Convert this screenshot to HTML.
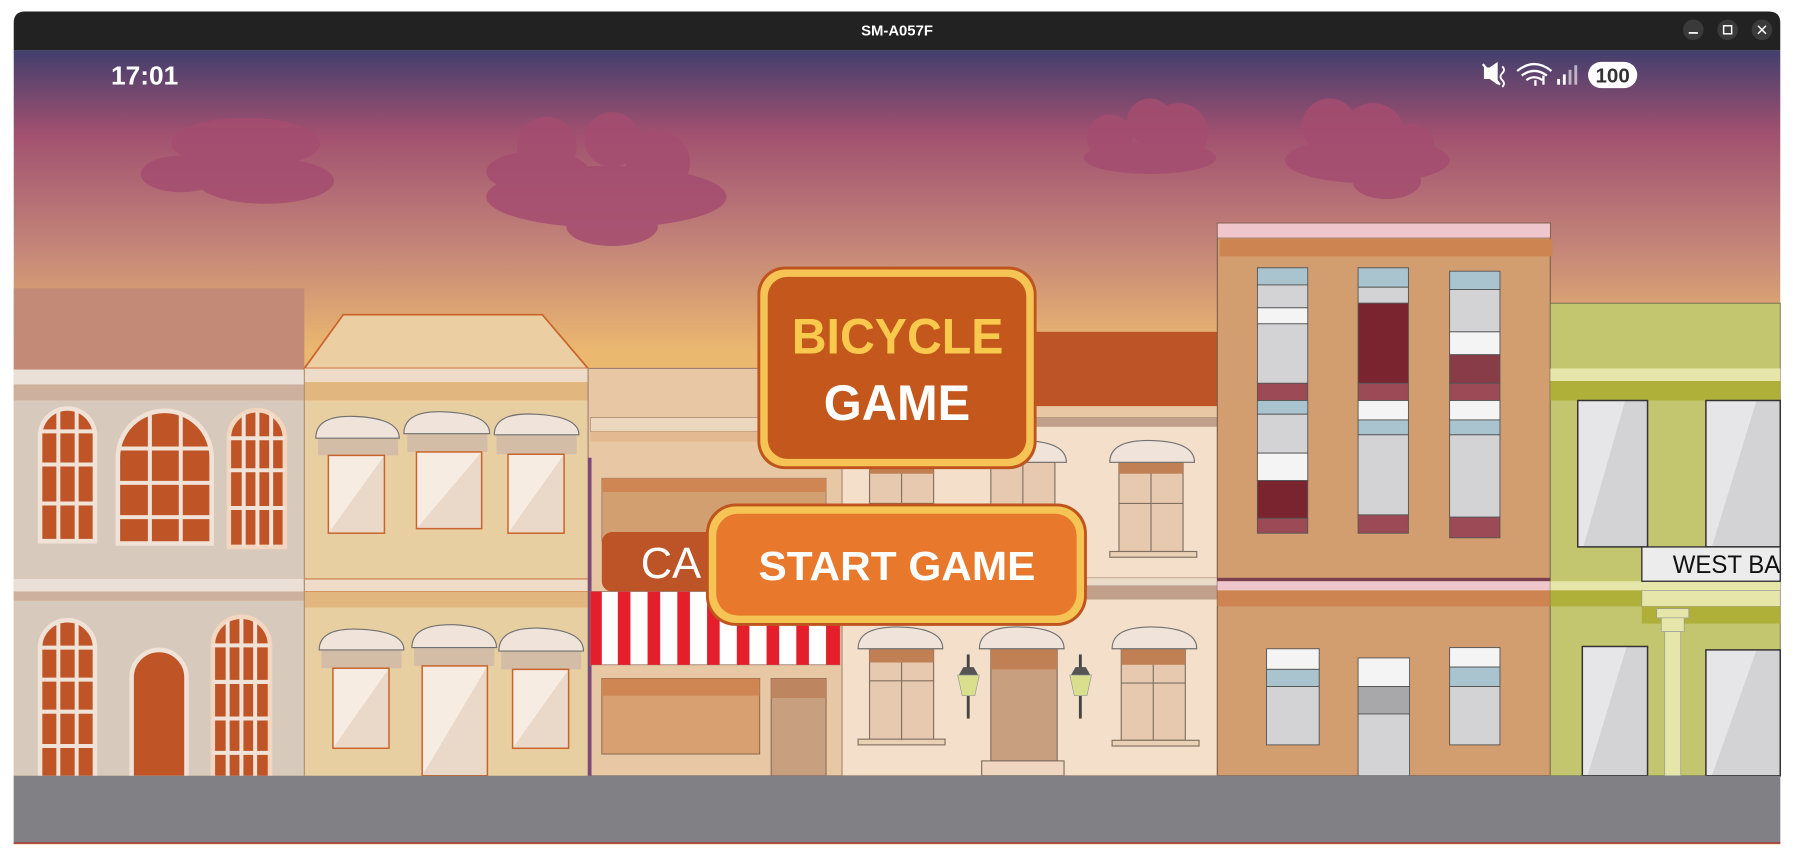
<!DOCTYPE html>
<html><head><meta charset="utf-8"><style>
html,body{margin:0;padding:0;background:#fff;width:1794px;height:860px;overflow:hidden}
svg{display:block}
</style></head><body>
<svg width="1794" height="860" viewBox="0 0 1568 751.6" xmlns="http://www.w3.org/2000/svg" font-family="'Liberation Sans', sans-serif">
<defs>
<linearGradient id="sky" x1="0" y1="44" x2="0" y2="330" gradientUnits="userSpaceOnUse">
<stop offset="0" stop-color="#423f6e"/><stop offset="0.25" stop-color="#a0506f"/><stop offset="0.6" stop-color="#c48579"/><stop offset="0.92" stop-color="#ebb86f"/></linearGradient>
<linearGradient id="wpane" x1="0" y1="0" x2="1" y2="1"><stop offset="0.5" stop-color="#f6ece2"/><stop offset="0.5" stop-color="#ead8c8"/></linearGradient>
<linearGradient id="gpane" x1="0" y1="0" x2="1" y2="0.6"><stop offset="0.5" stop-color="#e6e6e8"/><stop offset="0.5" stop-color="#d3d3d5"/></linearGradient>
</defs>
<rect width="1568" height="752" fill="#fff"/>
<path d="M12 20 Q12 10 22 10 H1546 Q1556 10 1556 20 V44 H12 Z" fill="#222"/>
<text x="784" y="31" fill="#fff" font-size="13" font-weight="bold" text-anchor="middle">SM-A057F</text>
<circle cx="1480" cy="26" r="9" fill="#3a3a3a"/><rect x="1476" y="28" width="8" height="1.5" fill="#fff"/>
<circle cx="1510" cy="26" r="9" fill="#3a3a3a"/><rect x="1506.5" y="22.5" width="7" height="7" fill="none" stroke="#fff" stroke-width="1.3"/>
<circle cx="1540" cy="26" r="9" fill="#3a3a3a"/><path d="M1536.5 22.5 L1543.5 29.5 M1543.5 22.5 L1536.5 29.5" stroke="#fff" stroke-width="1.3"/>
<rect x="12" y="44" width="1544" height="694" fill="url(#sky)"/>
<g fill="#a44d70" opacity="0.85">
<ellipse cx="232" cy="158" rx="60" ry="20"/><ellipse cx="158" cy="152" rx="35" ry="16"/><ellipse cx="215" cy="125" rx="65" ry="22"/>
<ellipse cx="530" cy="172" rx="105" ry="27"/><ellipse cx="535" cy="198" rx="40" ry="17"/><circle cx="478" cy="128" r="26"/><circle cx="535" cy="122" r="24"/><circle cx="575" cy="142" r="28"/><ellipse cx="470" cy="150" rx="45" ry="18"/>
<ellipse cx="1005" cy="138" rx="58" ry="14"/><circle cx="1005" cy="106" r="20"/><circle cx="1030" cy="116" r="26"/><circle cx="970" cy="120" r="20"/>
<ellipse cx="1195" cy="140" rx="72" ry="20"/><circle cx="1162" cy="110" r="24"/><circle cx="1200" cy="118" r="28"/><circle cx="1232" cy="130" r="22"/><ellipse cx="1212" cy="158" rx="30" ry="16"/>
</g>
<text x="97" y="74" fill="#fff" font-size="23" font-weight="bold">17:01</text>
<g fill="#fff">
<path d="M1297 59 h5 l7 -5 v20 l-7 -5 h-5 Z"/><path d="M1296 56 L1311 74" stroke="#fff" stroke-width="2"/>
<path d="M1313 58 q3 3 0 6 q-3 3 0 6 q3 3 0 6" fill="none" stroke="#fff" stroke-width="1.6"/>
<path d="M1326 62 q15 -12 30 0" fill="none" stroke="#fff" stroke-width="2"/><path d="M1330 66 q11 -8 22 0" fill="none" stroke="#fff" stroke-width="2"/><path d="M1334 70 q7 -5 14 0" fill="none" stroke="#fff" stroke-width="2"/>
<rect x="1341" y="70" width="2" height="5"/><rect x="1348" y="66" width="2" height="8"/>
<rect x="1361" y="69" width="2.5" height="5"/><rect x="1366" y="65" width="2.5" height="9"/><rect x="1371" y="61" width="2.5" height="13" opacity="0.6"/><rect x="1376" y="57" width="2.5" height="17" opacity="0.6"/>
<rect x="1388" y="54" width="43" height="23" rx="11.5"/>
</g>
<text x="1409.5" y="72" fill="#333" font-size="18" font-weight="bold" text-anchor="middle">100</text>

<rect x="12" y="252" width="254" height="71" fill="#c38a77"/>
<rect x="12" y="323" width="254" height="13" fill="#eae0d8"/><rect x="12" y="336" width="254" height="14" fill="#cdb09e"/>
<rect x="12" y="350" width="254" height="156" fill="#d8c9bd"/>
<rect x="12" y="506" width="254" height="11" fill="#eae0d8"/><rect x="12" y="517" width="254" height="8" fill="#cdb09e"/>
<rect x="12" y="525" width="254" height="153" fill="#d8c9bd"/>
<g fill="#bf5427" stroke="#f0e2d6" stroke-width="4">
<path d="M35 473 V381 A24 24 0 0 1 83 381 V473 Z"/>
<path d="M103 475 V400 A41 41 0 0 1 185 400 V475 Z"/>
<path d="M200 478 V383 A24.5 24.5 0 0 1 249 383 V478 Z" stroke="#f2d6c0"/>
<path d="M35 680 V566 A24 24 0 0 1 83 566 V680 Z"/>
<path d="M115 680 V592 A24 24 0 0 1 163 592 V680 Z"/>
<path d="M186 680 V564 A25 25 0 0 1 236 564 V680 Z" stroke="#f2d6c0"/>
</g>
<g stroke="#f0e2d6" stroke-width="3.5">
<path d="M51 359 V473 M67 359 V473 M35 377 H83 M35 406 H83 M35 440 H83"/>
<path d="M131 360 V475 M158 360 V475 M103 392 H185 M103 422 H185 M103 452 H185"/>
<path d="M213 362 V478 M225 360 V478 M237 362 V478 M200 383 H249 M200 411 H249 M200 444 H249"/>
<path d="M51 545 V680 M67 545 V680 M35 566 H83 M35 594 H83 M35 622 H83 M35 652 H83"/>
<path d="M199 543 V680 M211 541 V680 M223 543 V680 M186 564 H236 M186 596 H236 M186 628 H236 M186 658 H236"/>
</g>
<path d="M300 275 H474 L514 322 H266 Z" fill="#ebcea2" stroke="#c8642c" stroke-width="1.5"/>
<rect x="266" y="322" width="248" height="12" fill="#eedcc9"/><rect x="266" y="334" width="248" height="16" fill="#e2b77f"/>
<rect x="266" y="350" width="248" height="156" fill="#e8cfa2"/>
<rect x="266" y="506" width="248" height="11" fill="#eedcc9" stroke="#c8642c" stroke-width="0.8"/><rect x="266" y="517" width="248" height="14" fill="#e2b77f"/>
<rect x="266" y="531" width="248" height="147" fill="#e8cfa2"/>
<line x1="266" y1="322" x2="266" y2="678" stroke="#b09070" stroke-width="1"/>
<g fill="#d3bda6"><rect x="278" y="383" width="70" height="15"/><rect x="356" y="379" width="70" height="16"/><rect x="434" y="380" width="70" height="17"/>
<rect x="281" y="568" width="70" height="16"/><rect x="362" y="566" width="70" height="16"/><rect x="438" y="569" width="70" height="16"/></g>
<g fill="#efe3da" stroke="#707070" stroke-width="1">
<path d="M276 383 Q276 362 312 364 Q349 366 349 383 Z"/><path d="M353 379 Q353 358 390 360 Q428 362 428 379 Z"/><path d="M432 380 Q432 360 468 362 Q506 364 506 380 Z"/>
<path d="M279 568 Q279 548 316 550 Q353 552 353 568 Z"/><path d="M360 566 Q360 545 397 546 Q434 548 434 566 Z"/><path d="M436 569 Q436 548 472 549 Q510 551 510 569 Z"/>
</g>
<g fill="url(#wpane)" stroke="#c8642c" stroke-width="1.3">
<rect x="287" y="398" width="49" height="68"/><rect x="364" y="395" width="57" height="67"/><rect x="444" y="397" width="49" height="69"/>
<rect x="291" y="584" width="49" height="70"/><rect x="369" y="582" width="57" height="96"/><rect x="448" y="585" width="49" height="69"/>
</g>
<rect x="514" y="322" width="222" height="356" fill="#e8c8a4" stroke="#a08070" stroke-width="1"/>
<rect x="516" y="365" width="220" height="12" fill="#ecd6bd" stroke="#a08070" stroke-width="0.6"/><rect x="516" y="377" width="220" height="9" fill="#e2b990"/>
<rect x="514" y="400" width="3" height="278" fill="#7a4a7a"/>
<rect x="526" y="418" width="196" height="55" fill="#d2a070" stroke="#a08070" stroke-width="0.8"/><rect x="526" y="418" width="196" height="12" fill="#cf8652"/>
<rect x="526" y="465" width="130" height="52" rx="9" fill="#bd5427"/>
<text x="560" y="505" fill="#fff" font-size="38">CA</text>
<rect x="516" y="517" width="218" height="64" fill="#fff" stroke="#a08070" stroke-width="0.8"/>
<g fill="#e41e2a"><rect x="516" y="517" width="10" height="64"/><rect x="540" y="517" width="11" height="64"/><rect x="566" y="517" width="11" height="64"/><rect x="592" y="517" width="11" height="64"/><rect x="618" y="517" width="11" height="64"/><rect x="644" y="517" width="11" height="64"/><rect x="670" y="517" width="11" height="64"/><rect x="696" y="517" width="11" height="64"/><rect x="722" y="517" width="12" height="64"/></g>
<rect x="526" y="593" width="138" height="66" fill="#d8a070" stroke="#806050" stroke-width="0.8"/><rect x="526" y="593" width="138" height="15" fill="#cf8652"/>
<rect x="674" y="593" width="48" height="85" fill="#c8a07f" stroke="#806050" stroke-width="0.8"/><rect x="674" y="593" width="48" height="17" fill="#bd8560"/>
<rect x="736" y="290" width="328" height="65" fill="#bc5427"/>
<rect x="736" y="355" width="328" height="10" fill="#e8c8a4"/>
<rect x="736" y="365" width="328" height="313" fill="#f3dfca" stroke="#a08070" stroke-width="0.8"/>
<rect x="736" y="365" width="328" height="8" fill="#c0a08a"/>
<rect x="736" y="505" width="328" height="7" fill="#eadbc8" stroke="#a08070" stroke-width="0.5"/><rect x="736" y="512" width="328" height="12" fill="#c0a08a"/>
<g fill="#e6c9ae" stroke="#807060" stroke-width="1">
<rect x="760" y="404" width="56" height="78"/><rect x="866" y="404" width="56" height="78"/><rect x="978" y="404" width="56" height="78"/>
<rect x="760" y="567" width="56" height="80"/><rect x="980" y="567" width="56" height="80"/>
<rect x="750" y="482" width="76" height="5" fill="#ead0b4"/><rect x="970" y="482" width="76" height="5" fill="#ead0b4"/>
<rect x="750" y="646" width="76" height="5" fill="#ead0b4"/><rect x="972" y="647" width="76" height="5" fill="#ead0b4"/>
<path d="M788 404 V482 M894 404 V482 M1006 404 V482 M788 567 V647 M1008 567 V647 M760 595 H816 M980 597 H1036 M760 440 H816 M978 440 H1034" fill="none"/>
<rect x="866" y="567" width="58" height="98" fill="#c8a080"/><rect x="858" y="665" width="72" height="13" fill="#eed6c0"/>
</g>
<g fill="#c08054"><rect x="760" y="567" width="56" height="12"/><rect x="866" y="567" width="58" height="18"/><rect x="980" y="567" width="56" height="14"/><rect x="760" y="404" width="56" height="10"/><rect x="978" y="404" width="56" height="10"/></g>
<g fill="#efe3da" stroke="#707070" stroke-width="1">
<path d="M750 567 Q750 547 787 548 Q824 549 824 567 Z"/><path d="M856 567 Q856 547 893 548 Q930 549 930 567 Z"/><path d="M972 567 Q972 547 1009 548 Q1046 549 1046 567 Z"/>
<path d="M970 404 Q970 384 1007 385 Q1044 386 1044 404 Z"/><path d="M858 404 Q858 384 895 385 Q932 386 932 404 Z"/>
</g>
<g><rect x="845" y="572" width="2.5" height="56" fill="#444"/><path d="M838 590 L842 583 H851 L855 590 Z" fill="#555"/><path d="M837 590 H856 L852 608 H841 Z" fill="#d8e08e" stroke="#999" stroke-width="0.6"/>
<rect x="943" y="572" width="2.5" height="56" fill="#444"/><path d="M936 590 L940 583 H949 L953 590 Z" fill="#555"/><path d="M935 590 H954 L950 608 H939 Z" fill="#d8e08e" stroke="#999" stroke-width="0.6"/></g>
<rect x="1064" y="195" width="291" height="483" fill="#d39e6f" stroke="#806050" stroke-width="1"/>
<rect x="1064" y="195" width="291" height="13" fill="#efc6cc" stroke="#806050" stroke-width="0.6"/><rect x="1066" y="209" width="291" height="15" fill="#cd8450"/>
<rect x="1064" y="505" width="291" height="3" fill="#7a4050"/><rect x="1064" y="508" width="291" height="8" fill="#efc6cc"/><rect x="1064" y="516" width="291" height="14" fill="#cd8450"/>
<g stroke="#555" stroke-width="0.8">
<rect x="1099" y="234" width="44" height="15" fill="#a9c3cf"/><rect x="1099" y="249" width="44" height="20" fill="#d3d3d5"/><rect x="1099" y="269" width="44" height="14" fill="#f4f4f4"/><rect x="1099" y="283" width="44" height="52" fill="#d3d3d5"/><rect x="1099" y="335" width="44" height="15" fill="#9c4a56"/><rect x="1099" y="350" width="44" height="12" fill="#a9c3cf"/><rect x="1099" y="362" width="44" height="34" fill="#d3d3d5"/><rect x="1099" y="396" width="44" height="24" fill="#f4f4f4"/><rect x="1099" y="420" width="44" height="33" fill="#7a2430"/><rect x="1099" y="453" width="44" height="13" fill="#9c4a56"/>
<rect x="1187" y="234" width="44" height="17" fill="#a9c3cf"/><rect x="1187" y="251" width="44" height="14" fill="#d3d3d5"/><rect x="1187" y="265" width="44" height="70" fill="#7a2430"/><rect x="1187" y="335" width="44" height="15" fill="#9c4a56"/><rect x="1187" y="350" width="44" height="17" fill="#f4f4f4"/><rect x="1187" y="367" width="44" height="13" fill="#a9c3cf"/><rect x="1187" y="380" width="44" height="70" fill="#d3d3d5"/><rect x="1187" y="450" width="44" height="16" fill="#9c4a56"/>
<rect x="1267" y="237" width="44" height="16" fill="#a9c3cf"/><rect x="1267" y="253" width="44" height="37" fill="#d3d3d5"/><rect x="1267" y="290" width="44" height="20" fill="#f4f4f4"/><rect x="1267" y="310" width="44" height="25" fill="#883c48"/><rect x="1267" y="335" width="44" height="15" fill="#9c4a56"/><rect x="1267" y="350" width="44" height="17" fill="#f4f4f4"/><rect x="1267" y="367" width="44" height="13" fill="#a9c3cf"/><rect x="1267" y="380" width="44" height="72" fill="#d3d3d5"/><rect x="1267" y="452" width="44" height="18" fill="#9c4a56"/>
<rect x="1107" y="567" width="46" height="18" fill="#f4f4f4"/><rect x="1107" y="585" width="46" height="15" fill="#a9c3cf"/><rect x="1107" y="600" width="46" height="51" fill="#d3d3d5"/>
<rect x="1187" y="575" width="45" height="25" fill="#f4f4f4"/><rect x="1187" y="600" width="45" height="24" fill="#a8a8aa"/><rect x="1187" y="624" width="45" height="54" fill="#d3d3d5"/>
<rect x="1267" y="566" width="44" height="17" fill="#f4f4f4"/><rect x="1267" y="583" width="44" height="17" fill="#a9c3cf"/><rect x="1267" y="600" width="44" height="51" fill="#d3d3d5"/>
</g>
<rect x="1355" y="265" width="201" height="413" fill="#c3c66e" stroke="#707050" stroke-width="0.8"/>
<rect x="1355" y="322" width="201" height="11" fill="#e6e6aa"/><rect x="1355" y="333" width="201" height="17" fill="#aeb03a"/>
<g stroke="#333" stroke-width="1.3" fill="url(#gpane)">
<path d="M1379 350 H1440 V478 H1379 Z"/><path d="M1491 350 H1556 V478 H1491 Z"/>
<rect x="1383" y="565" width="57" height="113"/><rect x="1491" y="568" width="65" height="110"/>
</g>
<rect x="1355" y="508" width="201" height="8" fill="#e6e6aa"/><rect x="1355" y="516" width="80" height="14" fill="#aeb03a"/>
<rect x="1435" y="516" width="121" height="14" fill="#e6e6aa" stroke="#999" stroke-width="0.6"/><rect x="1435" y="530" width="121" height="15" fill="#aeb03a"/>
<rect x="1435" y="478" width="121" height="30" fill="#ececec" stroke="#333" stroke-width="1.2"/>
<text x="1462" y="501" fill="#111" font-size="22" textLength="94" lengthAdjust="spacingAndGlyphs">WEST BA</text>
<rect x="1448" y="532" width="28" height="8" fill="#e6e6aa" stroke="#999" stroke-width="0.6"/><rect x="1452" y="540" width="20" height="12" fill="#e6e6aa" stroke="#999" stroke-width="0.6"/>
<rect x="1455" y="552" width="14" height="126" fill="#e6e6aa" stroke="#999" stroke-width="0.6"/>
<rect x="12" y="678" width="1544" height="59" fill="#808085"/>
<rect x="12" y="736" width="1544" height="1.5" fill="#a04040"/>
<rect x="662" y="233" width="244" height="177" rx="24" fill="#c0541e"/>
<rect x="664.5" y="235.5" width="239" height="172" rx="22" fill="#f5c455"/>
<rect x="671" y="242" width="226" height="159" rx="17" fill="#c4581c"/>
<text x="692" y="309" fill="#f9c94e" font-size="44" font-weight="bold" textLength="185" lengthAdjust="spacingAndGlyphs">BICYCLE</text>
<text x="720" y="367" fill="#fff" font-size="44" font-weight="bold" textLength="128" lengthAdjust="spacingAndGlyphs">GAME</text>
<rect x="617" y="440" width="333" height="107" rx="26" fill="#c0541e"/>
<rect x="619.5" y="442.5" width="328" height="102" rx="24" fill="#f5c455"/>
<rect x="626" y="449" width="315" height="89" rx="19" fill="#e8782b"/>
<text x="663" y="507" fill="#fff" font-size="36" font-weight="bold" textLength="242" lengthAdjust="spacingAndGlyphs">START GAME</text>
</svg>
</body></html>
